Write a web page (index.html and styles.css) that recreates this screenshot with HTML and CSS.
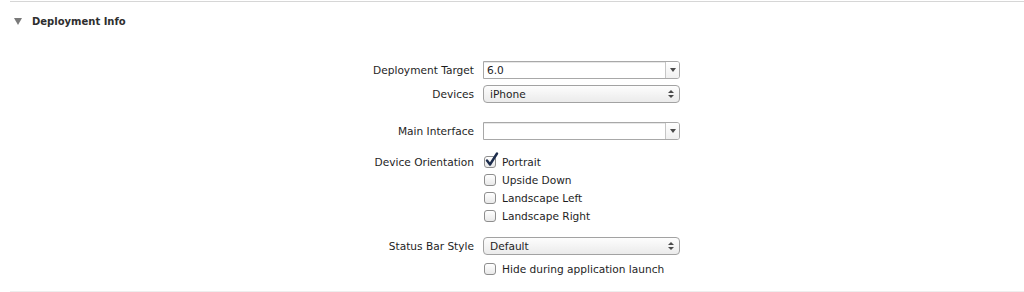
FILE: index.html
```html
<!DOCTYPE html>
<html lang="en">
<head>
    <meta charset="UTF-8">
    <title>Deployment Info</title>
    <link rel="stylesheet" href="styles.css">
</head>
<body>
    <div class="section">
        <div class="section-header">
            <span class="disclosure"></span>
            <h2 class="section-title">Deployment Info</h2>
        </div>

        <div class="form">
            <div class="row">
                <label class="label">Deployment Target</label>
                <div class="combo">
                    <span class="combo-value">6.0</span>
                    <span class="combo-button"><span class="arrow-down"></span></span>
                </div>
            </div>
            <div class="row row-tight">
                <label class="label">Devices</label>
                <div class="popup">
                    <span class="popup-value">iPhone</span>
                    <span class="updown"><span class="arrow-up"></span><span class="arrow-down"></span></span>
                </div>
            </div>

            <div class="row row-group">
                <label class="label">Main Interface</label>
                <div class="combo">
                    <span class="combo-value"></span>
                    <span class="combo-button"><span class="arrow-down"></span></span>
                </div>
            </div>

            <div class="row row-orientation">
                <label class="label">Device Orientation</label>
                <div class="checks">
                    <div class="check-row">
                        <span class="checkbox checked">
                            <svg class="checkmark" width="14" height="15" viewBox="0 0 14 15">
                                <path d="M2 8.5 L5 12.5 L12 1.5" fill="none" stroke="#1c2c4c" stroke-width="2.4" stroke-linecap="round" stroke-linejoin="round"/>
                            </svg>
                        </span>
                        <span>Portrait</span>
                    </div>
                    <div class="check-row"><span class="checkbox"></span><span>Upside Down</span></div>
                    <div class="check-row"><span class="checkbox"></span><span>Landscape Left</span></div>
                    <div class="check-row"><span class="checkbox"></span><span>Landscape Right</span></div>
                </div>
            </div>

            <div class="row row-status">
                <label class="label">Status Bar Style</label>
                <div class="popup">
                    <span class="popup-value">Default</span>
                    <span class="updown"><span class="arrow-up"></span><span class="arrow-down"></span></span>
                </div>
            </div>
            <div class="row row-hide">
                <span class="label"></span>
                <div class="check-row"><span class="checkbox"></span><span>Hide during application launch</span></div>
            </div>
        </div>
    </div>
</body>
</html>
```

FILE: styles.css
```css
* { margin: 0; padding: 0; box-sizing: border-box; }

body {
    font-family: "DejaVu Sans", "Lucida Grande", sans-serif;
    font-size: 10.6px;
    color: #1e1e1e;
    background: #ffffff;
    width: 1024px;
    height: 292px;
    overflow: hidden;
}

.section {
    margin: 1px 0 0 10px;
    height: 291px;
    border-top: 1px solid #d6d6d6;
    border-bottom: 1px solid #eeeeee;
}

.section-header {
    display: flex;
    align-items: center;
    gap: 10px;
    padding: 12px 0 0 4px;
    height: 26px;
}

.disclosure {
    width: 0;
    height: 0;
    border-left: 4px solid transparent;
    border-right: 4px solid transparent;
    border-top: 7px solid #7a7a7a;
}

.section-title {
    font-size: 10px;
    font-weight: bold;
    color: #2e2e2e;
}

.form {
    display: flex;
    flex-direction: column;
    margin-top: 33px;
}

.row {
    display: grid;
    grid-template-columns: 120px 197px;
    column-gap: 9px;
    justify-content: center;
    align-items: center;
}

.row-tight { margin-top: 6px; }
.row-group { margin-top: 19px; }
.row-orientation { margin-top: 13px; align-items: start; }
.row-status { margin-top: 12px; }
.row-hide { margin-top: 5px; }

.label {
    text-align: right;
    line-height: 18px;
    white-space: nowrap;
}

.combo {
    display: flex;
    height: 18px;
    border: 1px solid #a8a8a8;
    border-radius: 0 3px 3px 0;
    background: #ffffff;
    box-shadow: inset 0 1px 0 #e8e8e8;
}

.combo-value {
    flex: 1;
    padding-left: 3px;
    line-height: 17px;
}

.combo-button {
    width: 14px;
    display: flex;
    align-items: center;
    justify-content: center;
    border-left: 1px solid #c6c6c6;
    border-radius: 0 2px 2px 0;
    background: linear-gradient(#ffffff, #f0f0f0);
}

.arrow-down {
    width: 0;
    height: 0;
    border-left: 3px solid transparent;
    border-right: 3px solid transparent;
    border-top: 4px solid #4a4a4a;
}

.arrow-up {
    width: 0;
    height: 0;
    border-left: 3px solid transparent;
    border-right: 3px solid transparent;
    border-bottom: 3px solid #4a4a4a;
}

.popup {
    display: flex;
    align-items: center;
    height: 18px;
    border: 1px solid #a2a2a2;
    border-radius: 4px;
    background: linear-gradient(#fdfdfd, #ebebeb);
}

.popup-value {
    flex: 1;
    padding-left: 6px;
    line-height: 17px;
}

.updown {
    display: flex;
    flex-direction: column;
    align-items: center;
    gap: 2px;
    width: 16px;
}

.updown .arrow-down {
    border-top-width: 3px;
}

.checks {
    display: flex;
    flex-direction: column;
}

.check-row {
    display: flex;
    align-items: center;
    gap: 6px;
    height: 18px;
    padding-left: 1px;
}

.checkbox {
    position: relative;
    width: 12px;
    height: 12px;
    border: 1px solid #8e8e8e;
    border-radius: 3px;
    background: linear-gradient(#ffffff, #e9e9e9);
}

.checkmark {
    position: absolute;
    left: 0;
    top: -5px;
}
```
